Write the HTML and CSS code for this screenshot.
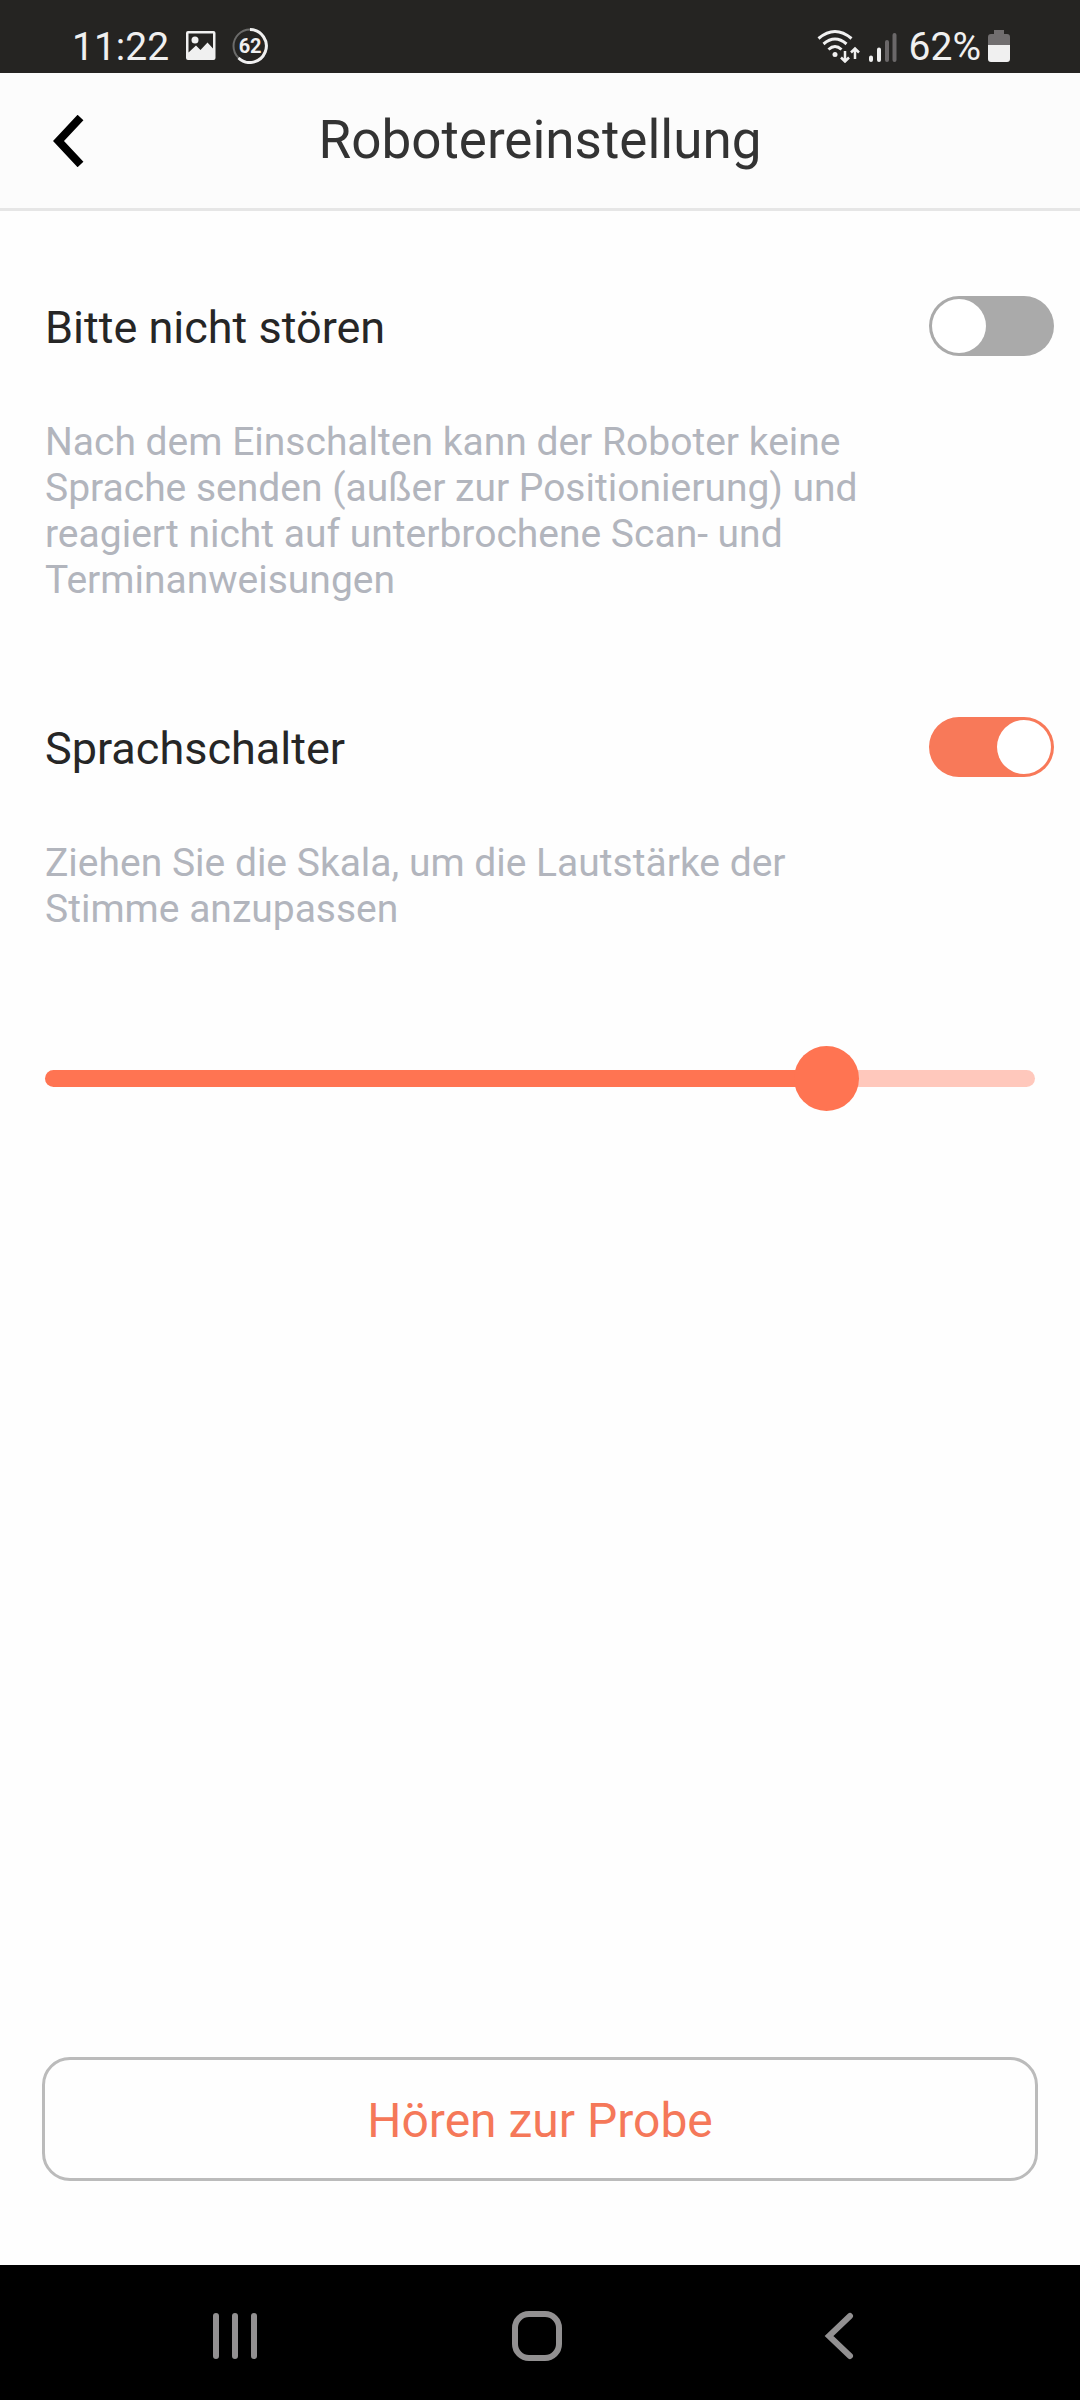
FILE: index.html
```html
<!DOCTYPE html>
<html lang="de">
<head>
<meta charset="utf-8">
<meta name="viewport" content="width=device-width, initial-scale=1">
<title>Robotereinstellung</title>
<link rel="stylesheet" href="styles.css">
</head>
<body>
<div class="status-bar">
  <div class="status-group">
    <span class="status-text">11:22</span>
    <svg class="image-icon" width="32" height="32" viewBox="0 0 32 32" aria-hidden="true">
      <path fill="#f0f0f0" fill-rule="evenodd" d="M3 1H28.500A2 2 0 0 1 30.500 3V28A2 2 0 0 1 28.500 30H3A2 2 0 0 1 1 28V3A2 2 0 0 1 3 1ZM3.500 3.500V22.500L11 15.500L15.500 20L22.500 12.500L28 18.500V3.500Z"/>
      <circle cx="10" cy="10" r="3.500" fill="#f0f0f0"/>
    </svg>
    <span class="level">
      <svg class="level-ring" width="36" height="36" viewBox="0 0 36 36" fill="none" aria-hidden="true">
        <circle cx="18" cy="18" r="16.500" stroke="#6b6b6a" stroke-width="2"/>
        <path d="M18 1.500A16.500 16.500 0 1 1 6.500 30" stroke="#f0f0f0" stroke-width="3"/>
      </svg>
      <span class="level-value">62</span>
    </span>
  </div>
  <div class="status-group status-right">
    <svg width="44" height="34" viewBox="0 0 44 34" fill="none" stroke="#f0f0f0" stroke-width="3" aria-hidden="true">
      <path d="M1.500 9.500Q18 -4.500 34.500 9.500M6.500 15Q18 5 29.500 15M11.500 20.500Q18 14.500 24.500 20.500"/>
      <circle cx="18" cy="25.500" r="2.500" fill="#f0f0f0" stroke="none"/>
      <path stroke-width="2.500" d="M28 22V32M24 28.500L28 32.500L32 28.500M38 30V20M34 23.500L38 19.500L42 23.500"/>
    </svg>
    <svg class="signal" width="30" height="34" viewBox="0 0 30 34" stroke-width="4" stroke-linecap="round" aria-hidden="true">
      <path stroke="#f0f0f0" d="M3 28.500V31M11 20.500V31"/>
      <path stroke="#6b6869" d="M19 13V31M26.500 6V31"/>
    </svg>
    <span class="status-text">62%</span>
    <svg width="22" height="34" viewBox="0 0 22 34" aria-hidden="true">
      <path fill="#716e6f" d="M6 1H16V5H19A3 3 0 0 1 22 8V16H0V8A3 3 0 0 1 3 5H6Z"/>
      <path fill="#f0f0f0" d="M0 16H22V30A3 3 0 0 1 19 33H3A3 3 0 0 1 0 30Z"/>
    </svg>
  </div>
</div>

<header class="header">
  <button class="back" type="button" aria-label="Zurück">
    <svg width="32" height="52" viewBox="0 0 32 52" fill="none" stroke="#000" stroke-width="8" aria-hidden="true">
      <path d="M28.500 2.500L6.500 26L28.500 49.500"/>
    </svg>
  </button>
  <h1 class="title">Robotereinstellung</h1>
</header>

<main class="settings">
  <section class="setting">
    <div class="setting-row">
      <label class="setting-name" for="dnd">Bitte nicht stören</label>
      <input class="toggle" id="dnd" type="checkbox" role="switch" aria-describedby="dnd-text">
    </div>
    <p class="setting-text" id="dnd-text">Nach dem Einschalten kann der Roboter keine Sprache senden (außer zur Positionierung) und reagiert nicht auf unterbrochene Scan- und Terminanweisungen</p>
  </section>
  <section class="setting">
    <div class="setting-row">
      <label class="setting-name" for="voice">Sprachschalter</label>
      <input class="toggle" id="voice" type="checkbox" role="switch" checked>
    </div>
    <p class="setting-text" id="volume-text">Ziehen Sie die Skala, um die Lautstärke der Stimme anzupassen</p>
  </section>
  <input class="volume" type="range" min="0" max="100" value="81" aria-labelledby="volume-text">
  <button class="listen" type="button">Hören zur Probe</button>
</main>

<nav class="nav-bar" aria-label="Navigation">
  <button class="nav-button" type="button" aria-label="Letzte Apps">
    <svg width="46" height="50" viewBox="0 0 46 50" stroke="#929091" stroke-width="6" stroke-linecap="round" aria-hidden="true">
      <path d="M4 5V45M23 5V45M42 5V45"/>
    </svg>
  </button>
  <button class="nav-button" type="button" aria-label="Startseite">
    <svg width="50" height="50" viewBox="0 0 50 50" fill="none" stroke="#929091" stroke-width="6" aria-hidden="true">
      <rect x="3" y="3" width="44" height="44" rx="14"/>
    </svg>
  </button>
  <button class="nav-button" type="button" aria-label="Zurück">
    <svg width="30" height="50" viewBox="0 0 30 50" fill="none" stroke="#929091" stroke-width="6" stroke-linecap="round" aria-hidden="true">
      <path d="M26 5L5 25L26 45"/>
    </svg>
  </button>
</nav>
</body>
</html>
```
FILE: styles.css
```css
* {
  box-sizing: border-box;
}

body {
  margin: 0;
  min-height: 100vh;
  display: flex;
  flex-direction: column;
  background: #fefefe;
  color: #262626;
  font-family: Roboto, sans-serif;
}

button {
  border: 0;
  padding: 0;
  background: none;
  font: inherit;
}

svg {
  display: block;
}

.status-bar {
  display: flex;
  justify-content: space-between;
  align-items: center;
  padding: 18px 70px 0 71px;
  height: 73px;
  background: #252422;
  color: #f0f0f0;
}

.status-group {
  display: flex;
  align-items: center;
  gap: 15px;
}

.status-right {
  gap: 7px;
}

.status-text {
  padding: 2px 1px 0;
  font-size: 39px;
  line-height: 50px;
}

.status-right .status-text {
  padding: 2px 0 0;
}

.signal {
  margin-right: 4px;
}

.level {
  display: grid;
  place-items: center;
}

.level-ring,
.level-value {
  grid-area: 1 / 1;
}

.level-value {
  font-size: 20px;
  line-height: 36px;
  font-weight: 700;
}

.header {
  display: grid;
  grid-template-columns: 90px 1fr 90px;
  align-items: center;
  height: 138px;
  padding: 0 45px;
  border-bottom: 3px solid #e6e6e6;
  background: #fcfcfc;
}

.back {
  justify-self: start;
  padding: 0 7px;
}

.title {
  margin: 0;
  padding-bottom: 2px;
  color: #333;
  font-size: 53px;
  line-height: 64px;
  font-weight: 400;
  text-align: center;
}

.settings {
  flex: 1;
  display: flex;
  flex-direction: column;
  padding: 85px 42px 84px;
}

.setting {
  margin: 0 3px 114px;
}

.setting-row {
  display: flex;
  justify-content: space-between;
  align-items: center;
  height: 60px;
  margin-right: -19px;
}

.setting-name {
  padding-top: 3px;
  font-size: 45px;
  line-height: 57px;
}

.toggle {
  appearance: none;
  display: flex;
  align-items: center;
  width: 125px;
  height: 60px;
  margin: 0;
  padding: 3px;
  border-radius: 30px;
  background: #aaa;
}

.toggle::before {
  content: "";
  width: 54px;
  height: 54px;
  border-radius: 50%;
  background: #fff;
}

.toggle:checked {
  justify-content: flex-end;
  background: #f87959;
}

.setting-text {
  max-width: 864px;
  margin: 63px 0 0;
  color: #b2b5bd;
  font-size: 39px;
  line-height: 46px;
}

.volume {
  appearance: none;
  height: 65px;
  margin: 0 3px 60px;
  background: none;
}

.volume::-webkit-slider-runnable-track {
  height: 17px;
  border-radius: 9px;
  background: linear-gradient(to right, #ff7452 80%, #ffc8bc 80%);
}

.volume::-webkit-slider-thumb {
  appearance: none;
  width: 65px;
  height: 65px;
  margin-top: -24px;
  border-radius: 50%;
  background: #ff7452;
}

.listen {
  height: 124px;
  margin-top: auto;
  padding-top: 3px;
  border: 3px solid #bbb;
  border-radius: 28px;
  color: #f57859;
  font-size: 48px;
  line-height: 60px;
}

.nav-bar {
  display: flex;
  justify-content: space-around;
  align-items: center;
  height: 135px;
  padding: 6px 90px 0 84px;
  background: #000;
}

.nav-button {
  display: grid;
  place-items: center;
  width: 90px;
  height: 90px;
}
```
